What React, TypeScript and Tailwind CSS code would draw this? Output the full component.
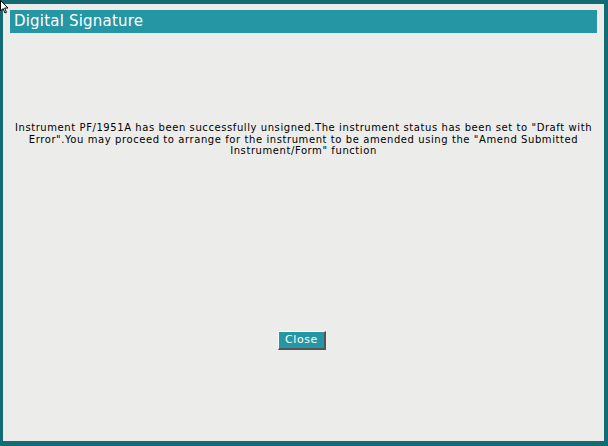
import React from 'react';

export default function App() {
  return (
    <div className="relative w-[608px] h-[446px] bg-[#136b73] pt-[4px] pl-[3px] pr-[4px] pb-[5px] font-['DejaVu_Sans',Verdana,sans-serif]">
      <div className="h-full bg-[#ecedea] flex flex-col px-[7px] pt-[6px]">
        {/* Title bar */}
        <div className="h-[23px] bg-[#2596a3] flex items-center pl-[4px]">
          <h1 className="text-white text-[15px] leading-none tracking-[0.2px]">Digital Signature</h1>
        </div>

        {/* Message */}
        <div className="mt-[89px] text-center text-black text-[10px] leading-[11.5px] tracking-[0.58px]">
          Instrument PF/1951A has been successfully unsigned.The instrument status has been set to "Draft with Error".You may proceed to arrange for the instrument to be amended using the "Amend Submitted Instrument/Form" function
        </div>

        {/* Close */}
        <div className="mt-[174px] flex justify-center pr-[3px]">
          <button className="w-[48px] h-[19px] bg-[#2596a3] text-white text-[11px] leading-none tracking-[0.6px] border border-t-white border-l-white border-r-[#555] border-b-[#555] border-r-2 border-b-2">
            Close
          </button>
        </div>
      </div>

      {/* mouse pointer */}
      <svg className="absolute left-0 top-0" width="12" height="14" viewBox="0 0 12 14">
        <path d="M0.5 0.5 L0.5 11 L3 8.5 L5 13 L6.5 12.3 L4.6 8 L8 8 Z" fill="#fff" stroke="#000" strokeWidth="1" />
      </svg>
    </div>
  );
}
